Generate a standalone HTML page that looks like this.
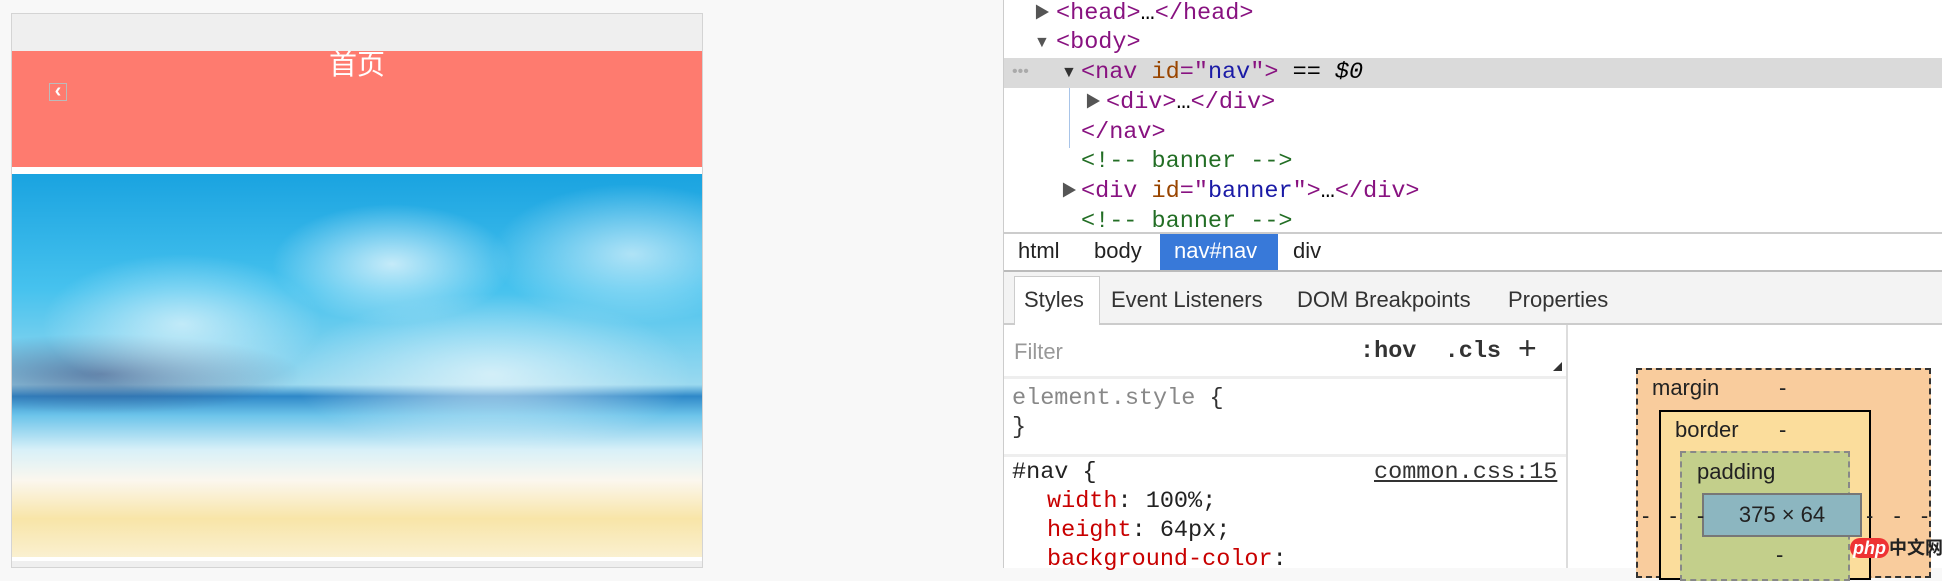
<!DOCTYPE html>
<html><head><meta charset="utf-8"><style>
*{margin:0;padding:0;box-sizing:border-box}
body{width:1942px;height:568px;background:#f8f8f8;position:relative;overflow:hidden;font-family:"Liberation Sans","Noto Sans CJK SC",sans-serif}
.a{position:absolute}
.m{position:absolute;font-family:"Liberation Mono","DejaVu Sans Mono",monospace;font-size:23.5px;white-space:pre;line-height:30px}
.tr{position:absolute;font-size:16px;line-height:30px;color:#555}
.tag{color:#881280}.attr{color:#994500}.val{color:#1a1aa6}.cm{color:#236e25}
.s{position:absolute;font-size:22px;line-height:36px;white-space:pre;color:#333}
</style></head><body>
<!-- phone -->
<div class="a" style="left:11px;top:13px;width:692px;height:555px;background:#efefef;border:1px solid #d4d4d4"></div>
<div class="a" style="left:12px;top:51px;width:690px;height:116px;background:#fe7b6f"></div>
<div class="a" style="left:12px;top:167px;width:690px;height:7px;background:#fff"></div>
<div class="a" style="left:12px;top:48px;width:690px;text-align:center;color:#fff;font-size:28px;line-height:34px">首页</div>
<div class="a" style="left:49px;top:83px;width:18px;height:18px;border:1px solid #bbb;background:#fe7b6f;color:#fff;font-size:20px;line-height:15px;font-weight:bold;text-align:center">&lsaquo;</div>
<div class="a" style="left:12px;top:174px;width:690px;height:383px;background:linear-gradient(180deg,#1aa3e0 0%,#46c2ee 30%,#9ad9ef 55%,#2f88c8 58%,#6cc4ea 63%,#d8f0f8 72%,#fbf7ee 80%,#f8e5a8 90%,#faf0d0 100%)"></div>
<div class="a" style="left:12px;top:174px;width:690px;height:383px;background:radial-gradient(ellipse 120px 60px at 380px 90px,rgba(255,255,255,.7),transparent),radial-gradient(ellipse 140px 70px at 620px 80px,rgba(255,255,255,.6),transparent),radial-gradient(ellipse 200px 80px at 480px 200px,rgba(255,255,255,.6),transparent),radial-gradient(ellipse 140px 70px at 170px 150px,rgba(255,255,255,.6),transparent),radial-gradient(ellipse 200px 40px at 90px 200px,rgba(60,70,120,.6),transparent)"></div>
<div class="a" style="left:12px;top:557px;width:690px;height:4px;background:#fff"></div>
<!-- devtools -->
<div class="a" style="left:1003px;top:0;width:939px;height:568px;background:#fff;border-left:1px solid #ccc"></div>
<div class="a" style="left:1004px;top:58px;width:938px;height:30px;background:#dadada"></div>
<div class="a" style="left:1069px;top:88px;width:1px;height:60px;background:#a8c4e8"></div>
<div class="a" style="left:1012px;top:57px;line-height:30px;color:#aaa;font-size:16px">•••</div>
<div class="tr" style="left:1034px;top:-1px">▶</div><div class="m" style="left:1056px;top:-1px"><span class="tag">&lt;head&gt;</span>…<span class="tag">&lt;/head&gt;</span></div>
<div class="tr" style="left:1034px;top:28px">▼</div><div class="m" style="left:1056px;top:28px"><span class="tag">&lt;body&gt;</span></div>
<div class="tr" style="left:1061px;top:58px;color:#333">▼</div><div class="m" style="left:1081px;top:58px"><span class="tag">&lt;nav </span><span class="attr">id</span><span class="tag">="</span><span class="val">nav</span><span class="tag">"&gt;</span> == <i>$0</i></div>
<div class="tr" style="left:1085px;top:88px">▶</div><div class="m" style="left:1106px;top:88px"><span class="tag">&lt;div&gt;</span>…<span class="tag">&lt;/div&gt;</span></div>
<div class="m" style="left:1081px;top:118px"><span class="tag">&lt;/nav&gt;</span></div>
<div class="m" style="left:1081px;top:147px"><span class="cm">&lt;!-- banner --&gt;</span></div>
<div class="tr" style="left:1061px;top:177px">▶</div><div class="m" style="left:1081px;top:177px"><span class="tag">&lt;div </span><span class="attr">id</span><span class="tag">="</span><span class="val">banner</span><span class="tag">"&gt;</span>…<span class="tag">&lt;/div&gt;</span></div>
<div class="m" style="left:1081px;top:207px"><span class="cm">&lt;!-- banner --&gt;</span></div>
<div class="a" style="left:1004px;top:232px;width:938px;height:40px;background:#fff;border-top:2px solid #ccc;border-bottom:2px solid #bbb"></div>
<div class="a" style="left:1160px;top:234px;width:118px;height:36px;background:#3879d9"></div>
<div class="s" style="left:1018px;top:233px;color:#222">html</div>
<div class="s" style="left:1094px;top:233px;color:#222">body</div>
<div class="s" style="left:1174px;top:233px;color:#fff">nav#nav</div>
<div class="s" style="left:1293px;top:233px;color:#222">div</div>
<div class="a" style="left:1004px;top:272px;width:938px;height:53px;background:#f3f3f3;border-bottom:2px solid #ccc"></div>
<div class="a" style="left:1014px;top:276px;width:86px;height:49px;background:#fff;border:1px solid #ccc;border-bottom:none"></div>
<div class="s" style="left:1024px;top:282px">Styles</div>
<div class="s" style="left:1111px;top:282px">Event Listeners</div>
<div class="s" style="left:1297px;top:282px">DOM Breakpoints</div>
<div class="s" style="left:1508px;top:282px">Properties</div>
<div class="a" style="left:1566px;top:325px;width:2px;height:243px;background:#ddd"></div>
<div class="a" style="left:1004px;top:376px;width:562px;height:3px;background:#eee"></div>
<div class="a" style="left:1004px;top:454px;width:562px;height:3px;background:#eee"></div>
<div class="a" style="left:1014px;top:337px;font-size:22px;line-height:30px;color:#999">Filter</div>
<div class="m" style="left:1360px;top:337px;font-weight:bold;color:#333">:hov  .cls</div>
<div class="a" style="left:1518px;top:330px;font-size:32px;line-height:36px;color:#333">+</div>
<div class="a" style="left:1553px;top:362px;width:0;height:0;border-left:9px solid transparent;border-bottom:9px solid #333"></div>
<div class="m" style="left:1012px;top:384px;color:#333"><span style="color:#888">element.style</span> {</div>
<div class="m" style="left:1012px;top:413px;color:#333">}</div>
<div class="m" style="left:1012px;top:458px;color:#222">#nav {</div>
<div class="m" style="left:1374px;top:458px;color:#333;text-decoration:underline">common.css:15</div>
<div class="m" style="left:1047px;top:487px;color:#222"><span style="color:#c80000">width</span>: 100%;</div>
<div class="m" style="left:1047px;top:516px;color:#222"><span style="color:#c80000">height</span>: 64px;</div>
<div class="m" style="left:1047px;top:545px;color:#222"><span style="color:#c80000">background-color</span>:</div>
<!-- box model -->
<div class="a" style="left:1636px;top:368px;width:295px;height:210px;background:#f9cc9d;border:2px dashed #333"></div>
<div class="a" style="left:1659px;top:410px;width:212px;height:170px;background:#fbdd9c;border:2px solid #000"></div>
<div class="a" style="left:1680px;top:451px;width:170px;height:130px;background:#c3cf8b;border:2px dashed #888"></div>
<div class="a" style="left:1702px;top:493px;width:160px;height:44px;background:#8cb6c0;border:2px solid #777;text-align:center;font-size:22px;line-height:40px;color:#222">375 × 64</div>
<div class="a" style="left:1652px;top:373px;font-size:22px;line-height:30px;color:#222">margin</div>
<div class="a" style="left:1779px;top:373px;font-size:22px;line-height:30px;color:#222">-</div>
<div class="a" style="left:1675px;top:415px;font-size:22px;line-height:30px;color:#222">border</div>
<div class="a" style="left:1779px;top:415px;font-size:22px;line-height:30px;color:#222">-</div>
<div class="a" style="left:1697px;top:457px;font-size:22px;line-height:30px;color:#222">padding</div>
<div class="a" style="left:1642px;top:501px;font-size:22px;line-height:30px;color:#222;word-spacing:14px">- - -</div>
<div class="a" style="left:1866px;top:501px;font-size:22px;line-height:30px;color:#222;word-spacing:14px">- - -</div>
<div class="a" style="left:1776px;top:540px;font-size:22px;line-height:30px;color:#222">-</div>
<div class="a" style="left:1850px;top:536px;font-size:18px;font-weight:bold;line-height:24px;color:#222;white-space:pre"><span style="background:#e33;color:#fff;border-radius:10px;padding:0 3px;font-style:italic">php</span>中文网</div>
</body></html>
